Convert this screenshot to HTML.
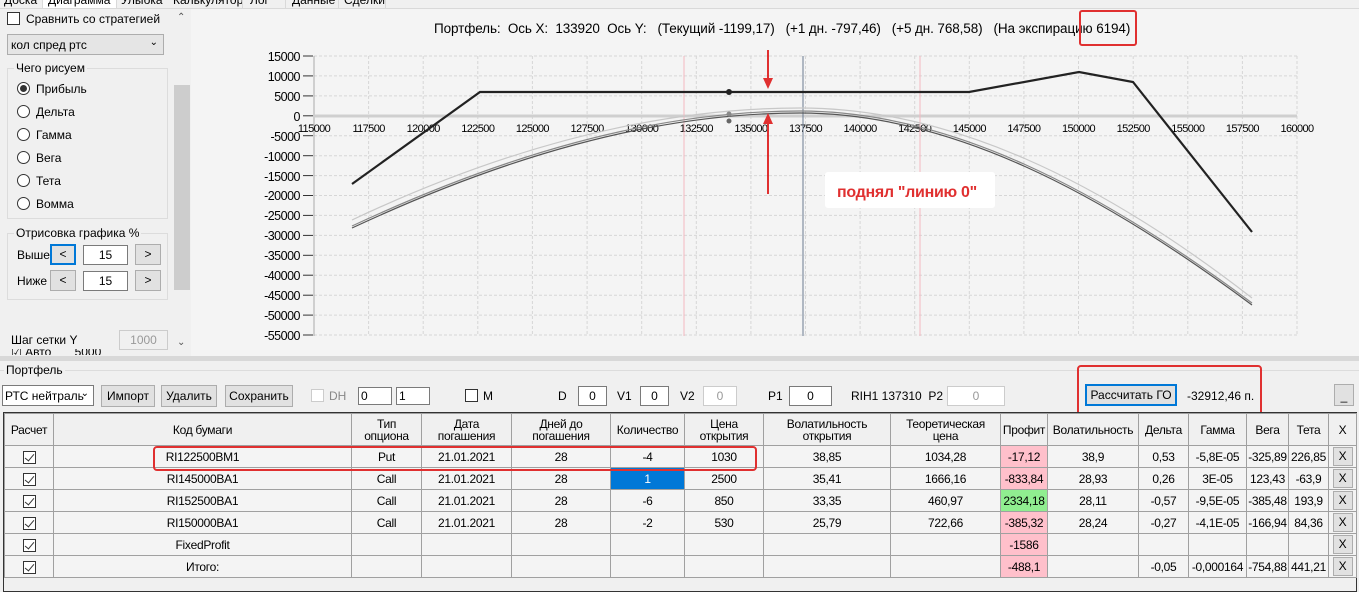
<!DOCTYPE html>
<html><head><meta charset="utf-8"><style>
*{box-sizing:border-box;margin:0;padding:0}
body{width:1359px;height:592px;overflow:hidden;background:#f0f0f0;font-family:"Liberation Sans",sans-serif;font-size:12px;color:#000;position:relative}
.a{position:absolute;white-space:nowrap}
.rb{width:13px;height:13px;border:1px solid #333;border-radius:50%;background:#fff}
.cb{width:13px;height:13px;border:1px solid #333;background:#fff}
.btn{position:absolute;border:1px solid #adadad;background:#e1e1e1;text-align:center;font-size:12px}
.inp{position:absolute;border:1px solid #7a7a7a;background:#fff;text-align:center;font-size:12px}
table{border-collapse:collapse;table-layout:fixed;font-size:12px;letter-spacing:-0.3px}
td,th{border:1px solid #a0a0a0;text-align:center;height:22px;padding:0;overflow:hidden;white-space:nowrap;background:#f4f4f4}
th{font-weight:normal;background:#f0f0f0;height:32px;line-height:12px;font-size:12px}
.pk{background:#ffc0cb}.gr{background:#90ee90}
.x{display:inline-block;width:20px;height:19px;border:1px solid #adadad;background:#e1e1e1;line-height:17px}
.chk{display:inline-block;width:13px;height:13px;border:1px solid #333;background:#fff;position:relative;vertical-align:middle}
.chk:after{content:"";position:absolute;left:3px;top:0px;width:4px;height:8px;border:solid #333;border-width:0 1px 1px 0;transform:rotate(40deg)}
</style></head><body>
<!-- tabs -->
<div class="a" style="left:0;top:0;width:1359px;height:9px;background:#f0f0f0;border-bottom:1px solid #d9d9d9"></div>
<div class="a" style="left:42px;top:-3px;width:75px;height:12px;background:#fff;border:1px solid #d9d9d9;border-top:none"></div>
<div class="a" style="left:4px;top:-7px;font-size:12px">Доска</div>
<div class="a" style="left:48px;top:-7px">Диаграмма</div>
<div class="a" style="left:121px;top:-7px">Улыбка</div>
<div class="a" style="left:173px;top:-7px">Калькулятор</div>
<div class="a" style="left:250px;top:-7px">Лог</div>
<div class="a" style="left:292px;top:-7px">Данные</div>
<div class="a" style="left:344px;top:-7px">Сделки</div>
<div class="a" style="left:242px;top:0;width:1px;height:9px;background:#d9d9d9"></div>
<div class="a" style="left:285px;top:0;width:1px;height:9px;background:#d9d9d9"></div>
<div class="a" style="left:338px;top:0;width:1px;height:9px;background:#d9d9d9"></div>
<div class="a" style="left:385px;top:0;width:1px;height:9px;background:#d9d9d9"></div>

<!-- left panel -->
<div class="a cb" style="left:7px;top:12px"></div>
<div class="a" style="left:26px;top:12px">Сравнить со стратегией</div>
<div class="a" style="left:7px;top:34px;width:157px;height:21px;border:1px solid #adadad;background:#e5e5e5;padding:3px 3px">кол спред ртс<span style="position:absolute;right:5px;top:2px;font-size:10px">&#8964;</span></div>
<div class="a" style="left:7px;top:68px;width:161px;height:151px;border:1px solid #dcdcdc"></div>
<div class="a" style="left:14px;top:61px;background:#f0f0f0;padding:0 2px">Чего рисуем</div>
<div class="a rb" style="left:17px;top:82px"><div style="width:7px;height:7px;border-radius:50%;background:#333;margin:2px"></div></div>
<div class="a" style="left:36px;top:82px">Прибыль</div>
<div class="a rb" style="left:17px;top:105px"></div><div class="a" style="left:36px;top:105px">Дельта</div>
<div class="a rb" style="left:17px;top:128px"></div><div class="a" style="left:36px;top:128px">Гамма</div>
<div class="a rb" style="left:17px;top:151px"></div><div class="a" style="left:36px;top:151px">Вега</div>
<div class="a rb" style="left:17px;top:174px"></div><div class="a" style="left:36px;top:174px">Тета</div>
<div class="a rb" style="left:17px;top:197px"></div><div class="a" style="left:36px;top:197px">Вомма</div>
<div class="a" style="left:7px;top:233px;width:161px;height:67px;border:1px solid #dcdcdc"></div>
<div class="a" style="left:14px;top:226px;background:#f0f0f0;padding:0 2px">Отрисовка графика %</div>
<div class="a" style="left:17px;top:248px">Выше</div>
<div class="btn" style="left:50px;top:244px;width:26px;height:21px;border:2px solid #0078d7;line-height:17px">&lt;</div>
<div class="inp" style="left:83px;top:245px;width:45px;height:20px;line-height:18px">15</div>
<div class="btn" style="left:135px;top:244px;width:26px;height:21px;line-height:19px">&gt;</div>
<div class="a" style="left:17px;top:274px">Ниже</div>
<div class="btn" style="left:50px;top:270px;width:26px;height:21px;line-height:19px">&lt;</div>
<div class="inp" style="left:83px;top:271px;width:45px;height:20px;line-height:18px">15</div>
<div class="btn" style="left:135px;top:270px;width:26px;height:21px;line-height:19px">&gt;</div>
<div class="a" style="left:11px;top:333px">Шаг сетки Y</div>
<div class="inp" style="left:119px;top:330px;width:49px;height:20px;line-height:18px;color:#999;border-color:#ccc;background:#f0f0f0">1000</div>
<div class="a" style="left:11px;top:349px;height:6px;overflow:hidden;width:110px;font-size:12px;line-height:6px">☑ Авто &nbsp; &nbsp; &nbsp; 5000</div>
<!-- scrollbar -->
<div class="a" style="left:174px;top:10px;width:16px;height:345px;background:#f0f0f0"></div>
<div class="a" style="left:174px;top:85px;width:16px;height:205px;background:#cdcdcd"></div>
<div class="a" style="left:177px;top:12px;font-size:10px;color:#555">&#8963;</div>
<div class="a" style="left:177px;top:337px;font-size:10px;color:#555">&#8964;</div>

<!-- chart -->
<div class="a" style="left:191px;top:9px;width:1168px;height:347px;background:#f4f4f4"></div>
<div class="a" style="left:434px;top:21px;font-size:13.5px;letter-spacing:-0.1px">Портфель:&nbsp; Ось X:&nbsp; 133920&nbsp; Ось Y:&nbsp;&nbsp; (Текущий -1199,17)&nbsp;&nbsp; (+1 дн. -797,46)&nbsp;&nbsp; (+5 дн. 768,58)&nbsp;&nbsp; (На экспирацию 6194)</div>
<div class="a" style="left:1079px;top:10px;width:58px;height:36px;border:2px solid #e03030;border-radius:3px"></div>
<svg class="a" style="left:0;top:0" width="1359" height="360">
<g stroke="#d6d6d6" stroke-dasharray="3,2" stroke-width="1">
<line x1="314" y1="56" x2="1297" y2="56"/><line x1="314" y1="75.9" x2="1297" y2="75.9"/><line x1="314" y1="95.9" x2="1297" y2="95.9"/><line x1="314" y1="135.7" x2="1297" y2="135.7"/><line x1="314" y1="155.7" x2="1297" y2="155.7"/><line x1="314" y1="175.6" x2="1297" y2="175.6"/><line x1="314" y1="195.5" x2="1297" y2="195.5"/><line x1="314" y1="215.4" x2="1297" y2="215.4"/><line x1="314" y1="235.4" x2="1297" y2="235.4"/><line x1="314" y1="255.3" x2="1297" y2="255.3"/><line x1="314" y1="275.2" x2="1297" y2="275.2"/><line x1="314" y1="295.2" x2="1297" y2="295.2"/><line x1="314" y1="315.1" x2="1297" y2="315.1"/><line x1="314" y1="335" x2="1297" y2="335"/>
<line x1="368.6" y1="56" x2="368.6" y2="335"/><line x1="423.2" y1="56" x2="423.2" y2="335"/><line x1="477.8" y1="56" x2="477.8" y2="335"/><line x1="532.4" y1="56" x2="532.4" y2="335"/><line x1="587.1" y1="56" x2="587.1" y2="335"/><line x1="641.7" y1="56" x2="641.7" y2="335"/><line x1="696.3" y1="56" x2="696.3" y2="335"/><line x1="750.9" y1="56" x2="750.9" y2="335"/><line x1="805.5" y1="56" x2="805.5" y2="335"/><line x1="860.1" y1="56" x2="860.1" y2="335"/><line x1="914.7" y1="56" x2="914.7" y2="335"/><line x1="969.3" y1="56" x2="969.3" y2="335"/><line x1="1023.9" y1="56" x2="1023.9" y2="335"/><line x1="1078.5" y1="56" x2="1078.5" y2="335"/><line x1="1133.2" y1="56" x2="1133.2" y2="335"/><line x1="1187.8" y1="56" x2="1187.8" y2="335"/><line x1="1242.4" y1="56" x2="1242.4" y2="335"/><line x1="1297" y1="56" x2="1297" y2="335"/>
</g>
<line x1="314" y1="56" x2="314" y2="336" stroke="#aaa"/>
<line x1="314" y1="116" x2="1297" y2="116" stroke="#cfcfcf" stroke-width="3"/>
<g stroke="#333"><line x1="303" y1="56" x2="313" y2="56"/><line x1="303" y1="75.9" x2="313" y2="75.9"/><line x1="303" y1="95.9" x2="313" y2="95.9"/><line x1="303" y1="115.8" x2="313" y2="115.8"/><line x1="303" y1="135.7" x2="313" y2="135.7"/><line x1="303" y1="155.7" x2="313" y2="155.7"/><line x1="303" y1="175.6" x2="313" y2="175.6"/><line x1="303" y1="195.5" x2="313" y2="195.5"/><line x1="303" y1="215.4" x2="313" y2="215.4"/><line x1="303" y1="235.4" x2="313" y2="235.4"/><line x1="303" y1="255.3" x2="313" y2="255.3"/><line x1="303" y1="275.2" x2="313" y2="275.2"/><line x1="303" y1="295.2" x2="313" y2="295.2"/><line x1="303" y1="315.1" x2="313" y2="315.1"/><line x1="303" y1="335" x2="313" y2="335"/></g>
<g font-family="Liberation Sans" font-size="12.5" text-anchor="end" fill="#000" letter-spacing="-0.5">
<text x="300" y="61">15000</text><text x="300" y="81">10000</text><text x="300" y="101">5000</text><text x="300" y="121">0</text><text x="300" y="141">-5000</text><text x="300" y="161">-10000</text><text x="300" y="181">-15000</text><text x="300" y="200">-20000</text><text x="300" y="220">-25000</text><text x="300" y="240">-30000</text><text x="300" y="260">-35000</text><text x="300" y="280">-40000</text><text x="300" y="300">-45000</text><text x="300" y="320">-50000</text><text x="300" y="340">-55000</text>
</g>
<g font-family="Liberation Sans" font-size="11" text-anchor="middle" fill="#000" letter-spacing="-0.6">
<text x="314" y="132">115000</text><text x="368.6" y="132">117500</text><text x="423.2" y="132">120000</text><text x="477.8" y="132">122500</text><text x="532.4" y="132">125000</text><text x="587.1" y="132">127500</text><text x="641.7" y="132">130000</text><text x="696.3" y="132">132500</text><text x="750.9" y="132">135000</text><text x="805.5" y="132">137500</text><text x="860.1" y="132">140000</text><text x="914.7" y="132">142500</text><text x="969.3" y="132">145000</text><text x="1023.9" y="132">147500</text><text x="1078.5" y="132">150000</text><text x="1133.2" y="132">152500</text><text x="1187.8" y="132">155000</text><text x="1242.4" y="132">157500</text><text x="1297" y="132">160000</text>
</g>
<line x1="684" y1="56" x2="684" y2="336" stroke="#f4b8c0"/>
<line x1="920" y1="56" x2="920" y2="336" stroke="#f4b8c0"/>
<line x1="803" y1="56" x2="803" y2="336" stroke="#6a7a90"/>
<path d="M352,220 C500,150 650,108 800,108 C950,108 1100,180 1252,298" fill="none" stroke="#c8c8c8" stroke-width="1.2"/>
<path d="M352,226 C500,157 650,111 800,111 C950,111 1100,190 1252,303" fill="none" stroke="#888" stroke-width="1.2"/>
<path d="M352,228 C500,159 650,113 800,113 C950,113 1100,192 1252,305" fill="none" stroke="#555" stroke-width="1.2"/>
<polyline points="352,184 480,92 969,92 1079,72 1133,82 1252,232" fill="none" stroke="#222" stroke-width="2.2"/>
<circle cx="729" cy="92" r="3" fill="#222"/>
<circle cx="729" cy="114" r="2.5" fill="#888"/>
<circle cx="729" cy="121" r="2.5" fill="#666"/>
<line x1="768" y1="50" x2="768" y2="80" stroke="#e03030" stroke-width="2"/>
<polygon points="763,78 773,78 768,89" fill="#e03030"/>
<line x1="768" y1="194" x2="768" y2="122" stroke="#e03030" stroke-width="2"/>
<polygon points="763,124 773,124 768,113" fill="#e03030"/>
<rect x="825" y="172" width="170" height="36" rx="3" fill="#fff"/>
<text x="837" y="197" font-family="Liberation Sans" font-size="16" font-weight="bold" fill="#e03030" letter-spacing="-0.3">поднял "линию 0"</text>
</svg>

<!-- divider -->
<div class="a" style="left:0;top:356px;width:1359px;height:5px;background:#d8d8d8"></div>
<div class="a" style="left:0;top:370px;width:1359px;height:1px;background:#dcdcdc"></div>
<div class="a" style="left:4px;top:363px;background:#f0f0f0;padding:0 2px">Портфель</div>

<!-- toolbar -->
<div class="a" style="left:2px;top:385px;width:92px;height:21px;border:1px solid #7a7a7a;background:#fff;padding:3px 2px">РТС нейтраль<span style="position:absolute;right:4px;top:2px;font-size:10px">&#8964;</span></div>
<div class="btn" style="left:101px;top:385px;width:54px;height:22px;line-height:20px">Импорт</div>
<div class="btn" style="left:161px;top:385px;width:56px;height:22px;line-height:20px">Удалить</div>
<div class="btn" style="left:225px;top:385px;width:68px;height:22px;line-height:20px">Сохранить</div>
<div class="a cb" style="left:311px;top:389px;border-color:#ccc"></div>
<div class="a" style="left:329px;top:389px;color:#888">DH</div>
<div class="inp" style="left:358px;top:387px;width:34px;height:18px;text-align:left;padding-left:2px;line-height:16px">0</div>
<div class="inp" style="left:396px;top:387px;width:34px;height:18px;text-align:left;padding-left:2px;line-height:16px">1</div>
<div class="a cb" style="left:465px;top:389px"></div>
<div class="a" style="left:483px;top:389px">M</div>
<div class="a" style="left:558px;top:389px">D</div>
<div class="inp" style="left:578px;top:386px;width:29px;height:20px;line-height:18px">0</div>
<div class="a" style="left:617px;top:389px">V1</div>
<div class="inp" style="left:640px;top:386px;width:29px;height:20px;line-height:18px">0</div>
<div class="a" style="left:680px;top:389px">V2</div>
<div class="inp" style="left:703px;top:386px;width:34px;height:20px;line-height:18px;color:#999;border-color:#ccc">0</div>
<div class="a" style="left:768px;top:389px">P1</div>
<div class="inp" style="left:789px;top:386px;width:43px;height:20px;line-height:18px">0</div>
<div class="a" style="left:851px;top:389px">RIH1 137310&nbsp; P2</div>
<div class="inp" style="left:947px;top:386px;width:58px;height:20px;line-height:18px;color:#999;border-color:#ccc">0</div>
<div class="btn" style="left:1085px;top:384px;width:92px;height:22px;border:2px solid #0078d7;line-height:18px">Рассчитать ГО</div>
<div class="a" style="left:1187px;top:389px">-32912,46 п.</div>
<div class="a" style="left:1077px;top:365px;width:185px;height:53px;border:2px solid #e03030;border-radius:4px"></div>
<div class="btn" style="left:1334px;top:384px;width:20px;height:22px;line-height:22px">_</div>

<!-- table -->
<div class="a" style="left:3px;top:412px;width:1354px;height:180px;border:1px solid #333;background:#f0f0f0"></div>
<table class="a" style="left:4px;top:413px;width:1352px">
<colgroup><col style="width:49px"><col style="width:298px"><col style="width:70px"><col style="width:90px"><col style="width:99px"><col style="width:74px"><col style="width:79px"><col style="width:127px"><col style="width:110px"><col style="width:47px"><col style="width:91px"><col style="width:50px"><col style="width:58px"><col style="width:42px"><col style="width:40px"><col style="width:28px"></colgroup>
<tr><th>Расчет</th><th>Код бумаги</th><th>Тип<br>опциона</th><th>Дата<br>погашения</th><th>Дней до<br>погашения</th><th>Количество</th><th>Цена<br>открытия</th><th>Волатильность<br>открытия</th><th>Теоретическая<br>цена</th><th>Профит</th><th>Волатильность</th><th>Дельта</th><th>Гамма</th><th>Вега</th><th>Тета</th><th>X</th></tr>
<tr><td><span class="chk"></span></td><td>RI122500BM1</td><td>Put</td><td>21.01.2021</td><td>28</td><td>-4</td><td>1030</td><td>38,85</td><td>1034,28</td><td class="pk">-17,12</td><td>38,9</td><td>0,53</td><td>-5,8E-05</td><td>-325,89</td><td>226,85</td><td><span class="x">X</span></td></tr>
<tr><td><span class="chk"></span></td><td>RI145000BA1</td><td>Call</td><td>21.01.2021</td><td>28</td><td style="background:#0078d7;color:#fff">1</td><td>2500</td><td>35,41</td><td>1666,16</td><td class="pk">-833,84</td><td>28,93</td><td>0,26</td><td>3E-05</td><td>123,43</td><td>-63,9</td><td><span class="x">X</span></td></tr>
<tr><td><span class="chk"></span></td><td>RI152500BA1</td><td>Call</td><td>21.01.2021</td><td>28</td><td>-6</td><td>850</td><td>33,35</td><td>460,97</td><td class="gr">2334,18</td><td>28,11</td><td>-0,57</td><td>-9,5E-05</td><td>-385,48</td><td>193,9</td><td><span class="x">X</span></td></tr>
<tr><td><span class="chk"></span></td><td>RI150000BA1</td><td>Call</td><td>21.01.2021</td><td>28</td><td>-2</td><td>530</td><td>25,79</td><td>722,66</td><td class="pk">-385,32</td><td>28,24</td><td>-0,27</td><td>-4,1E-05</td><td>-166,94</td><td>84,36</td><td><span class="x">X</span></td></tr>
<tr><td><span class="chk"></span></td><td>FixedProfit</td><td></td><td></td><td></td><td></td><td></td><td></td><td></td><td class="pk">-1586</td><td></td><td></td><td></td><td></td><td></td><td><span class="x">X</span></td></tr>
<tr><td><span class="chk"></span></td><td>Итого:</td><td></td><td></td><td></td><td></td><td></td><td></td><td></td><td class="pk">-488,1</td><td></td><td>-0,05</td><td>-0,000164</td><td>-754,88</td><td>441,21</td><td><span class="x">X</span></td></tr>
</table>
<div class="a" style="left:153px;top:446px;width:604px;height:25px;border:2px solid #e03030;border-radius:4px"></div>
</body></html>
